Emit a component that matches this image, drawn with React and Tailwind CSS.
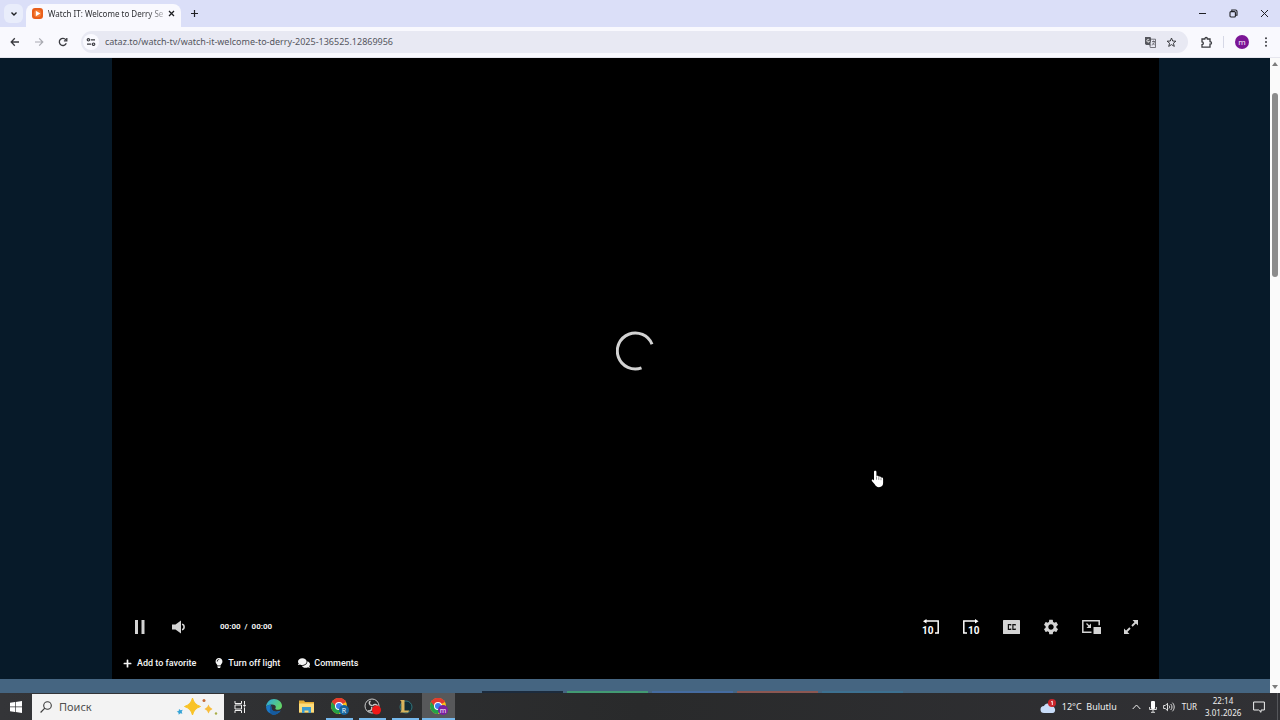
import React from "react";
import { FaPlus, FaLightbulb, FaComments } from "react-icons/fa";
import { MdSettings } from "react-icons/md";

const stroke = { fill: "none", stroke: "currentColor" };

function IconButton({ label, className = "", children }) {
  return (
    <button type="button" aria-label={label} className={`flex shrink-0 items-center justify-center ${className}`}>
      {children}
    </button>
  );
}

function ChromeLogo({ letter, badge }) {
  return (
    <svg width="18" height="18" viewBox="0 0 18 18">
      <circle cx="8" cy="8" r="8" fill="#fbc116" />
      <path d="M8 8 L1.1 4 A8 8 0 0 1 14.9 4 Z" fill="#e33b2e" />
      <path d="M8 8 L1.1 4 A8 8 0 0 0 8 16 L11 10 Z" fill="#24a148" />
      <path d="M8 4 H14.9 A8 8 0 0 0 1.1 4 L5 9 Z" fill="#e33b2e" />
      <circle cx="8" cy="8" r="4" fill="#fff" />
      <circle cx="8" cy="8" r="3" fill="#3b7ded" />
      <circle cx="13" cy="12" r="5" className={badge} />
      <text x="13" y="15" textAnchor="middle" fontSize="7" fill="#fff" fontFamily="Open Sans, sans-serif">
        {letter}
      </text>
    </svg>
  );
}

function TabStrip() {
  return (
    <header className="flex h-[27px] shrink-0 items-end bg-[#dbdff8] text-[#1f2024]">
      <IconButton label="Search tabs" className="mb-1 ml-1 h-[19px] w-[19px] rounded-md bg-[#e9edfb]">
        <svg width="8" height="8" viewBox="0 0 8 8" {...stroke} strokeWidth="1.4"><path d="M1.5 2.5 4 5l2.5-2.5" /></svg>
      </IconButton>
      <div className="ml-[3px] flex h-[23px] w-[155px] items-center rounded-t-lg bg-[#f9f9fe] pb-1 pl-[6px] pr-1">
        <svg width="11" height="11" viewBox="0 0 11 11" className="shrink-0">
          <rect width="11" height="11" rx="3" fill="#e85e1a" />
          <circle cx="5.5" cy="5.5" r="3.8" fill="#f47a32" />
          <path d="M3.8 2.7v5.6l4.6-2.8z" fill="#fff" />
        </svg>
        <span className="ml-[5px] flex-1 whitespace-nowrap bg-linear-to-r from-[#27282c] from-85% to-[#c9c9ce] bg-clip-text font-['Noto_Sans'] text-[8px] leading-4 text-transparent">
          Watch IT: Welcome to Derry Se
        </span>
        <IconButton label="Close tab" className="h-3 w-3">
          <svg width="7" height="7" viewBox="0 0 7 7" {...stroke} strokeWidth="1.3"><path d="m1 1 5 5M6 1 1 6" /></svg>
        </IconButton>
      </div>
      <IconButton label="New tab" className="mb-1 ml-1 h-[19px] w-[19px]">
        <svg width="9" height="9" viewBox="0 0 9 9" {...stroke} strokeWidth="1.2"><path d="M4.5 1v7M1 4.5h7" /></svg>
      </IconButton>
      <div className="ml-auto flex h-[27px]">
        <IconButton label="Minimize" className="w-[31px]">
          <svg width="9" height="9" viewBox="0 0 9 9" {...stroke}><path d="M1 4.5h7" /></svg>
        </IconButton>
        <IconButton label="Restore" className="w-[31px]">
          <svg width="9" height="9" viewBox="0 0 9 9" {...stroke} strokeWidth="1.1"><rect x="1" y="2.6" width="5.4" height="5.4" rx="1" /><path d="M2.8 2.4V1h3.7A1.5 1.5 0 0 1 8 2.5v3.7H6.6" /></svg>
        </IconButton>
        <IconButton label="Close" className="w-[31px]">
          <svg width="9" height="9" viewBox="0 0 9 9" {...stroke}><path d="m1 1 7 7M8 1 1 8" /></svg>
        </IconButton>
      </div>
    </header>
  );
}

function Toolbar() {
  return (
    <nav className="flex h-[31px] shrink-0 items-center border-b border-[#e6e6ee] bg-[#f9f9fe] pl-[3px] text-[#3a3b40]">
      <IconButton label="Back" className="h-6 w-6">
        <svg width="10" height="10" viewBox="0 0 10 10" {...stroke} strokeWidth="1.3"><path d="M9 5H1.3M4.8 1.3 1.2 5l3.6 3.7" /></svg>
      </IconButton>
      <IconButton label="Forward" className="h-6 w-6 text-[#a9aab1]">
        <svg width="10" height="10" viewBox="0 0 10 10" {...stroke} strokeWidth="1.2"><path d="M1 5h7.7M5.2 1.3 8.8 5 5.2 8.7" /></svg>
      </IconButton>
      <IconButton label="Reload" className="h-6 w-6">
        <svg width="10" height="10" viewBox="0 0 10 10" {...stroke} strokeWidth="1.3"><path d="M8.3 6.2A3.6 3.6 0 1 1 7.8 2.7L8.6 3.6" /><path d="M8.8.9v3H5.9" /></svg>
      </IconButton>
      <div className="ml-[6px] flex h-[22px] flex-1 items-center rounded-full bg-[#e8e9f3] pl-[2px] pr-[7px]">
        <IconButton label="View site information" className="h-4 w-4 rounded-full bg-[#fafaff]">
          <svg width="10" height="10" viewBox="0 0 10 10" {...stroke} strokeWidth="1.2"><circle cx="2.4" cy="2.8" r="1.2" /><path d="M4.8 2.8H9M1 7.2h4.2" /><circle cx="7.6" cy="7.2" r="1.2" /></svg>
        </IconButton>
        <input
          aria-label="Address"
          className="ml-[6px] h-5 min-w-0 flex-1 bg-transparent pb-px font-['Noto_Sans'] text-[9px] leading-5 text-[#54565e] outline-none"
          defaultValue="cataz.to/watch-tv/watch-it-welcome-to-derry-2025-136525.12869956"
        />
        <IconButton label="Translate" className="h-5 w-[22px]">
          <svg width="11" height="11" viewBox="0 0 11 11"><path d="M0 0h5.5l.8 2-1 6H1.2L0 7z" fill="#55565d" /><path d="M4.2 2.7a1.4 1.4 0 1 0 .3 1.7H3.2" fill="none" stroke="#fff" strokeWidth=".8" /><path d="M6.3 2.2h4.2v8.3H5.3L4.8 8h1.5M7 4.5h3M8.5 3.6v1M7.2 8c1.4-.8 2-2 2.1-3.3M7.5 5.8 9.6 8.2" fill="none" stroke="#55565d" strokeWidth=".8" /></svg>
        </IconButton>
        <IconButton label="Bookmark this tab" className="h-5 w-5">
          <svg width="11" height="11" viewBox="0 0 11 11" {...stroke}><path d="m5.5 1 1.2 3 3.2.2-2.5 2 .9 3.2-2.8-1.8-2.8 1.8.9-3.2-2.5-2L4.3 4z" /></svg>
        </IconButton>
      </div>
      <IconButton label="Extensions" className="ml-2 h-6 w-5">
        <svg width="13" height="13" viewBox="0 0 13 13" {...stroke} strokeWidth="1.3"><path d="M2 3h2.8c0-2 2.600-2 2.600 0H10v2.700c2 0 2 2.400 0 2.400v3H2V8.600c1.800-.2 1.800-2.600 0-2.800z" /></svg>
      </IconButton>
      <span className="ml-[7px] h-3 w-px bg-[#d6d8e6]" />
      <IconButton label="Profile" className="ml-[11px] h-[14px] w-[14px] rounded-full bg-[#7b1596] font-['Open_Sans'] text-[8px] leading-none text-white">m</IconButton>
      <IconButton label="Menu" className="ml-[7px] mr-1 h-6 w-5">
        <svg width="4" height="10" viewBox="0 0 4 10" fill="currentColor"><circle cx="2" cy="1.2" r="1" /><circle cx="2" cy="5" r="1" /><circle cx="2" cy="8.8" r="1" /></svg>
      </IconButton>
    </nav>
  );
}

function Controls() {
  const ten = { fontSize: 10, fontWeight: 700, fontFamily: "Roboto, sans-serif", fill: "currentColor", stroke: "none" };
  return (
    <div className="absolute inset-x-0 bottom-0 flex h-[35px] items-center px-2 text-[#d4d4d4]">
      <IconButton label="Pause" className="h-8 w-10">
        <svg width="12" height="14" viewBox="0 0 12 14" fill="currentColor"><path d="M1 0h3v14H1zM7.500 0h3v14h-3z" /></svg>
      </IconButton>
      <IconButton label="Mute" className="h-8 w-[38px]">
        <svg width="14" height="14" viewBox="0 0 14 14"><path d="M0 4.500h3.500L9 .5v13L3.500 9.500H0z" fill="currentColor" /><path d="M10 4.300c2.800.5 2.800 4.900 0 5.400" fill="none" stroke="currentColor" strokeWidth="1.600" /></svg>
      </IconButton>
      <span className="ml-[22px] whitespace-pre pt-px font-['Roboto'] text-[8px] font-bold leading-4 text-[#f2f2f2]">00:00  /  00:00</span>
      <div className="ml-auto flex">
        <IconButton label="Rewind 10 seconds" className="h-8 w-10 text-white">
          <svg width="18" height="16" viewBox="0 0 18 16" {...stroke} strokeWidth="1.500"><path d="M3 2h13.200v12H13" /><path d="M4.500 0v4.500L1 2.200z" fill="currentColor" stroke="none" /><text x="0" y="14.500" {...ten}>10</text></svg>
        </IconButton>
        <IconButton label="Forward 10 seconds" className="h-8 w-10 text-white">
          <svg width="18" height="16" viewBox="0 0 18 16" {...stroke} strokeWidth="1.500"><path d="M14 2H1.800v12H5" /><path d="M13 0v4.500l3.500-2.300z" fill="currentColor" stroke="none" /><text x="6" y="14.500" {...ten}>10</text></svg>
        </IconButton>
        <IconButton label="Captions" className="h-8 w-10">
          <svg width="17" height="14" viewBox="0 0 17 14"><rect width="17" height="14" rx=".5" fill="currentColor" /><path d="M7.700 5.500V4.700H5.400v4.600h2.300v-.8M12.200 5.500V4.700H9.900v4.600h2.300v-.8" fill="none" stroke="#111" strokeWidth="1.200" /></svg>
        </IconButton>
        <IconButton label="Settings" className="h-8 w-10"><MdSettings size={18} /></IconButton>
        <IconButton label="Picture in picture" className="h-8 w-10">
          <svg width="19" height="14" viewBox="0 0 19 14" {...stroke} strokeWidth="1.500"><path d="M9.500 12.200H.8V.8h16.400v4.400" /><path d="M11.500 7H19v7h-7.500z" fill="currentColor" stroke="none" /><path d="m4.500 3.500 3 3" strokeWidth="1.300" /><path d="M9 3.500V8H4.500z" fill="currentColor" stroke="none" /></svg>
        </IconButton>
        <IconButton label="Fullscreen" className="h-8 w-10">
          <svg width="14" height="14" viewBox="0 0 14 14"><path d="M8.500 0H14v5.500zM0 8.500V14h5.500z" fill="currentColor" /><path d="m12 2-4 4M6 8l-4 4" stroke="currentColor" strokeWidth="1.800" /></svg>
        </IconButton>
      </div>
    </div>
  );
}

function Page() {
  return (
    <div className="flex min-h-0 flex-1">
      <main className="relative flex min-w-0 flex-1 flex-col bg-[#071a29]">
        <section className="ml-28 mr-[111px] flex flex-1 flex-col bg-black">
          <div className="relative flex flex-1 items-center justify-center">
            <svg width="40" height="40" viewBox="0 0 40 40" role="img" aria-label="Loading"><path d="M36 13.200A18 18 0 1 0 25.500 36.900" fill="none" stroke="#d2d2d2" strokeWidth="3" /></svg>
            <Controls />
          </div>
          <div className="flex h-[35px] items-center gap-[18px] pl-[11px] pt-[3px] font-['Roboto'] text-[9px] font-medium leading-4 text-[#f5f5f5]">
            <button type="button" className="flex items-center gap-[5px]"><FaPlus size={9} />Add to favorite</button>
            <button type="button" className="flex items-center gap-1"><FaLightbulb size={10} />Turn off light</button>
            <button type="button" className="flex items-center gap-1"><FaComments size={12} />Comments</button>
          </div>
        </section>
        <div className="flex h-[14px] shrink-0 items-end gap-1 bg-[#456581] pl-[482px]">
          <span className="h-[2px] w-[81px] bg-[#1c2b3d]" />
          <span className="h-[2px] w-[81px] bg-[#429a73]" />
          <span className="h-[2px] w-[81px] bg-[#456ba0]" />
          <span className="h-[2px] w-[81px] bg-[#8b5752]" />
          <span className="h-[2px] w-[81px] bg-[#3d7090]" />
        </div>
        <svg width="14" height="18" viewBox="0 0 14 18" className="absolute left-[871px] top-[412px]">
          <path d="M4.200.8c.8 0 1.200.5 1.200 1.300V6c.8-.6 2.200-.3 2.300.8.900-.5 2.200-.2 2.300.9.900-.4 2.100 0 2.100 1.200v4.200c0 2.500-1.400 4.100-4.100 4.100-2.300 0-3.300-1.200-4.300-2.900L.9 10.900c-.6-1.100.6-1.800 1.300-1.100L3 10.600V2.100C3 1.300 3.400.8 4.200.8z" fill="#fff" />
          <path d="M5.500 6.500v3.200M7.800 7.200v2.700M10 8.200v2" stroke="#444" strokeWidth=".6" />
        </svg>
      </main>
      <div className="flex w-[10px] shrink-0 flex-col items-center bg-[#fafafa] py-1">
        <svg width="6" height="4" viewBox="0 0 6 4" fill="#7c7c7c"><path d="M0 4h6L3 0z" /></svg>
        <div className="mt-[27px] h-[184px] w-[6px] rounded-full bg-[#8b8b8b]" />
        <svg className="mt-auto" width="6" height="4" viewBox="0 0 6 4" fill="#7c7c7c"><path d="M0 0h6L3 4z" /></svg>
      </div>
    </div>
  );
}

function TaskButton({ label, running, active, children }) {
  return (
    <IconButton label={label} className={`relative h-[27px] w-[33px] ${active ? "bg-[#57585a]" : ""}`}>
      {children}
      {running && <span className={`absolute bottom-0 h-[2px] bg-[#76b9ed] ${active ? "inset-x-0" : "inset-x-[3px]"}`} />}
    </IconButton>
  );
}

function Taskbar() {
  return (
    <footer className="flex h-[27px] shrink-0 items-center bg-linear-to-r from-[#343538] via-[#292a2b] to-[#313135] font-['Noto_Sans'] text-[#f0f0f0]">
      <IconButton label="Start" className="h-[27px] w-8">
        <svg width="12" height="12" viewBox="0 0 12 12" fill="#fff"><path d="M0 1.700 5 1v4.600H0zM5.700.9 12 0v5.600H5.700zM0 6.300h5V11l-5-.7zM5.700 6.300H12V12l-6.300-.9z" /></svg>
      </IconButton>
      <div className="flex h-[26px] w-48 items-center bg-[#f3f3f3] pl-2 pr-[6px] text-[#3c3c3c]">
        <svg width="12" height="12" viewBox="0 0 12 12" {...stroke} strokeWidth="1.100"><circle cx="7.500" cy="4.500" r="3.800" /><path d="M4.800 7.200.6 11.500" /></svg>
        <input aria-label="Поиск" placeholder="Поиск" className="ml-[7px] h-6 w-0 flex-1 bg-transparent text-[11px] leading-6 placeholder:text-[#505050] outline-none" />
        <svg width="42" height="20" viewBox="0 0 42 20"><path d="M16.500 1q1.500 6.500 8 8.500-6.500 2-8 8.500-1.500-6.500-8-8.500 6.500-2 8-8.500z" fill="#f9c326" stroke="#f9c326" strokeWidth="1" strokeLinejoin="round" /><path d="M32.500 7.500q.9 3.500 4 4.500-3.100 1-4 4.500-.9-3.500-4-4.500 3.100-1 4-4.500z" fill="#f8bd3c" /><path d="m3 12 1.700 1.200 2-.4-1 2 .7 1.900-2-.4-1.700 1.400-.2-2-1.800-1.200 2-.6z" fill="#35a3d6" /><circle cx="28" cy="3.500" r="1.500" fill="#c66a35" /><circle cx="40" cy="16.500" r="1.200" fill="#a9ad49" /></svg>
      </div>
      <TaskButton label="Task view">
        <svg width="14" height="12" viewBox="0 0 14 12" {...stroke}><path d="M1 0v2.500h6.500V0M1 12V9.500h6.500V12M1 4h6.500v4H1zM10.500 0v3M10.500 6.500V12" /><circle cx="10.500" cy="4.500" r=".8" fill="currentColor" /></svg>
      </TaskButton>
      <TaskButton label="Edge">
        <svg width="16" height="16" viewBox="0 0 16 16">
          <defs><linearGradient id="edge" x1="0" y1="0" x2="1" y2=".5"><stop offset="0" stopColor="#2aa5e5" /><stop offset="1" stopColor="#62d467" /></linearGradient></defs>
          <path d="M0 8C.3 3.500 3.800 0 8 0s8 3 8 7c0 2.300-1.800 3.800-4 3.800-1.500 0-2.700-.6-2.700-1.300 0-.5.5-.7.500-1.500C9.800 6.600 8.500 5.500 6 5.500 3 5.500.8 6.500 0 8z" fill="url(#edge)" />
          <path d="M0 8c.8-1.700 2.800-2.600 5.500-2.600C3.300 7.500 5 12.700 10 12.700c2 0 3.500-.6 4.700-1.100A8 8 0 0 1 0 8z" fill="#1b78c8" />
          <path d="M6.700 6.600c-2 1.500-1 6.100 3.600 6.100 1.800 0 3.300-.6 4.400-1.100-2 3.600-5.500 4.700-8 4.300C2.500 14 3 8.500 6.700 6.600z" fill="#155b9f" />
        </svg>
      </TaskButton>
      <TaskButton label="File Explorer">
        <svg width="15" height="13" viewBox="0 0 15 13"><path d="M0 .5h5l1 1.500h9v10.500H0z" fill="#e6ad35" /><path d="M0 3.500h15v9H0z" fill="#fddc7b" /><path d="M3 7h9v6h-2.500v-2.500h-4V13H3z" fill="#3c9bd1" /></svg>
      </TaskButton>
      <TaskButton label="Chrome, R" running><ChromeLogo letter="R" badge="fill-[#17659d]" /></TaskButton>
      <TaskButton label="OBS Studio" running>
        <svg width="18" height="17" viewBox="0 0 18 17"><circle cx="8" cy="8" r="7" fill="#28292b" stroke="#c9c9c9" /><path d="M8 7.500C5 7.500 4.500 4 6.500 3M8.500 8c1.500-2.600 5-1.500 5 .8M7.500 8.800c1.500 2.500-1 5-3.500 4" fill="none" stroke="#c9c9c9" strokeWidth="1.500" /><circle cx="12.500" cy="12" r="4.500" fill="#f01818" /></svg>
      </TaskButton>
      <TaskButton label="League of Legends" running>
        <svg width="15" height="16" viewBox="0 0 15 16"><circle cx="8" cy="8" r="6" fill="#112c35" stroke="#31747b" /><path d="M2 1h4.500v10.500h5L10 13.500H2l1.300-1.500V2.500z" fill="#d8b45c" /></svg>
      </TaskButton>
      <TaskButton label="Chrome, m" running active><ChromeLogo letter="m" badge="fill-[#7b1fa2]" /></TaskButton>
      <div className="ml-auto flex h-full items-center text-[9px] leading-3">
        <button type="button" className="flex items-center gap-[5px] whitespace-pre">
          <svg width="17" height="15" viewBox="0 0 17 15"><path d="M4 14a3.500 3.500 0 0 1 0-7c1-3.500 6-3.500 7 0 5 0 5.500 7 1.500 7z" fill="#c8dcf8" /><circle cx="12" cy="4" r="4" fill="#c9252b" /><path d="m11 3 1.300-.8V6" fill="none" stroke="#fff" strokeWidth=".9" /></svg>
          <span>12°C  Bulutlu</span>
        </button>
        <IconButton label="Show hidden icons" className="ml-3 h-6 w-4"><svg width="9" height="6" viewBox="0 0 9 6" {...stroke}><path d="m.7 5 3.800-4 3.800 4" /></svg></IconButton>
        <IconButton label="Microphone" className="h-6 w-4"><svg width="8" height="12" viewBox="0 0 8 12"><rect x="2" width="4" height="8" rx="1" fill="#fff" /><path d="M.6 6v2.500h6.800V6M4 8.500V11M2 11.300h4" fill="none" stroke="#ddd" /></svg></IconButton>
        <IconButton label="Volume" className="h-6 w-4"><svg width="12" height="10" viewBox="0 0 12 10" {...stroke} strokeWidth=".9"><path d="M.6 3.500h1.700L4.500 1.300v7.400L2.300 6.500H.6zM6 3.500c.8.900.8 2.100 0 3M7.700 2c1.700 1.700 1.700 4.300 0 6M9.400.7c2.400 2.500 2.400 6.100 0 8.600" /></svg></IconButton>
        <button type="button" className="ml-[5px] text-[8px]">TUR</button>
        <button type="button" className="ml-2 w-9 text-center text-[8px]"><span className="block">22:14</span><span className="block">3.01.2026</span></button>
        <IconButton label="Notifications" className="ml-2 h-6 w-5"><svg width="12" height="12" viewBox="0 0 12 12" {...stroke}><path d="M.6 1h10.800v8H8v2.300L5.700 9H.6z" /></svg></IconButton>
        <span className="ml-2 mr-[2px] h-full w-px bg-[#55565a]" />
      </div>
    </footer>
  );
}

export default function App() {
  return (
    <div className="flex h-screen flex-col overflow-hidden">
      <TabStrip />
      <Toolbar />
      <Page />
      <Taskbar />
    </div>
  );
}
